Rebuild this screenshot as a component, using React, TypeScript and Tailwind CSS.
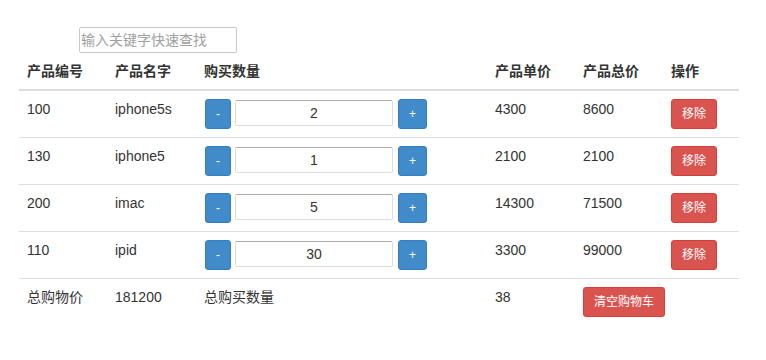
import React from "react"

const products = [
  { id: "100", name: "iphone5s", count: 2, price: 4300, total: 8600 },
  { id: "130", name: "iphone5", count: 1, price: 2100, total: 2100 },
  { id: "200", name: "imac", count: 5, price: 14300, total: 71500 },
  { id: "110", name: "ipid", count: 30, price: 3300, total: 99000 },
]

const font = "font-['Liberation_Sans','Noto_Sans_CJK_SC',sans-serif]"

function SmallBtn({ children, color }: { children: React.ReactNode; color: "blue" | "red" }) {
  const tone =
    color === "blue"
      ? "bg-[#428bca] border-[#357ebd]"
      : "bg-[#d9534f] border-[#d43f3a]"
  return (
    <button
      className={`${tone} border rounded-[3px] px-[10px] py-[5px] text-[12px] leading-[18px] text-white`}
    >
      {children}
    </button>
  )
}

export default function App() {
  return (
    <div className={`${font} text-[14px] leading-[20px] text-[#333] bg-white w-[766px] h-[360px]`}>
      <div className="pt-[27px] pl-[79px]">
        <input
          placeholder="输入关键字快速查找"
          className="w-[158px] h-[26px] border border-[#c8c8c8] rounded-[2px] px-[1px] text-[14px] placeholder:text-[#a0a0a0] outline-none"
        />
      </div>
      <table className="ml-[19px] w-[720px] border-collapse table-fixed">
        <colgroup>
          <col className="w-[88px]" />
          <col className="w-[89px]" />
          <col className="w-[291px]" />
          <col className="w-[88px]" />
          <col className="w-[88px]" />
          <col className="w-[76px]" />
        </colgroup>
        <thead>
          <tr className="border-b-2 border-[#ddd]">
            {["产品编号", "产品名字", "购买数量", "产品单价", "产品总价", "操作"].map((h) => (
              <th key={h} className="p-[8px] text-left font-bold align-bottom">
                {h}
              </th>
            ))}
          </tr>
        </thead>
        <tbody>
          {products.map((p) => (
            <tr key={p.id} className="border-b border-[#ddd]">
              <td className="p-[8px] align-top">{p.id}</td>
              <td className="p-[8px] align-top">{p.name}</td>
              <td className="p-[8px] align-top">
                <div className="flex items-start gap-[4px] pl-[1px]">
                  <SmallBtn color="blue">-</SmallBtn>
                  <input
                    readOnly
                    value={p.count}
                    className="mt-[1px] w-[158px] h-[26px] border border-[#ddd] border-t-[#aaa] rounded-[2px] text-center text-[14px] outline-none"
                  />
                  <div className="pl-[1px]">
                    <SmallBtn color="blue">+</SmallBtn>
                  </div>
                </div>
              </td>
              <td className="p-[8px] align-top">{p.price}</td>
              <td className="p-[8px] align-top">{p.total}</td>
              <td className="p-[8px] align-top">
                <SmallBtn color="red">移除</SmallBtn>
              </td>
            </tr>
          ))}
          <tr>
            <td className="p-[8px] align-top">总购物价</td>
            <td className="p-[8px] align-top">181200</td>
            <td className="p-[8px] align-top">总购买数量</td>
            <td className="p-[8px] align-top">38</td>
            <td className="p-[8px] align-top" colSpan={2}>
              <SmallBtn color="red">清空购物车</SmallBtn>
            </td>
          </tr>
        </tbody>
      </table>
    </div>
  )
}
